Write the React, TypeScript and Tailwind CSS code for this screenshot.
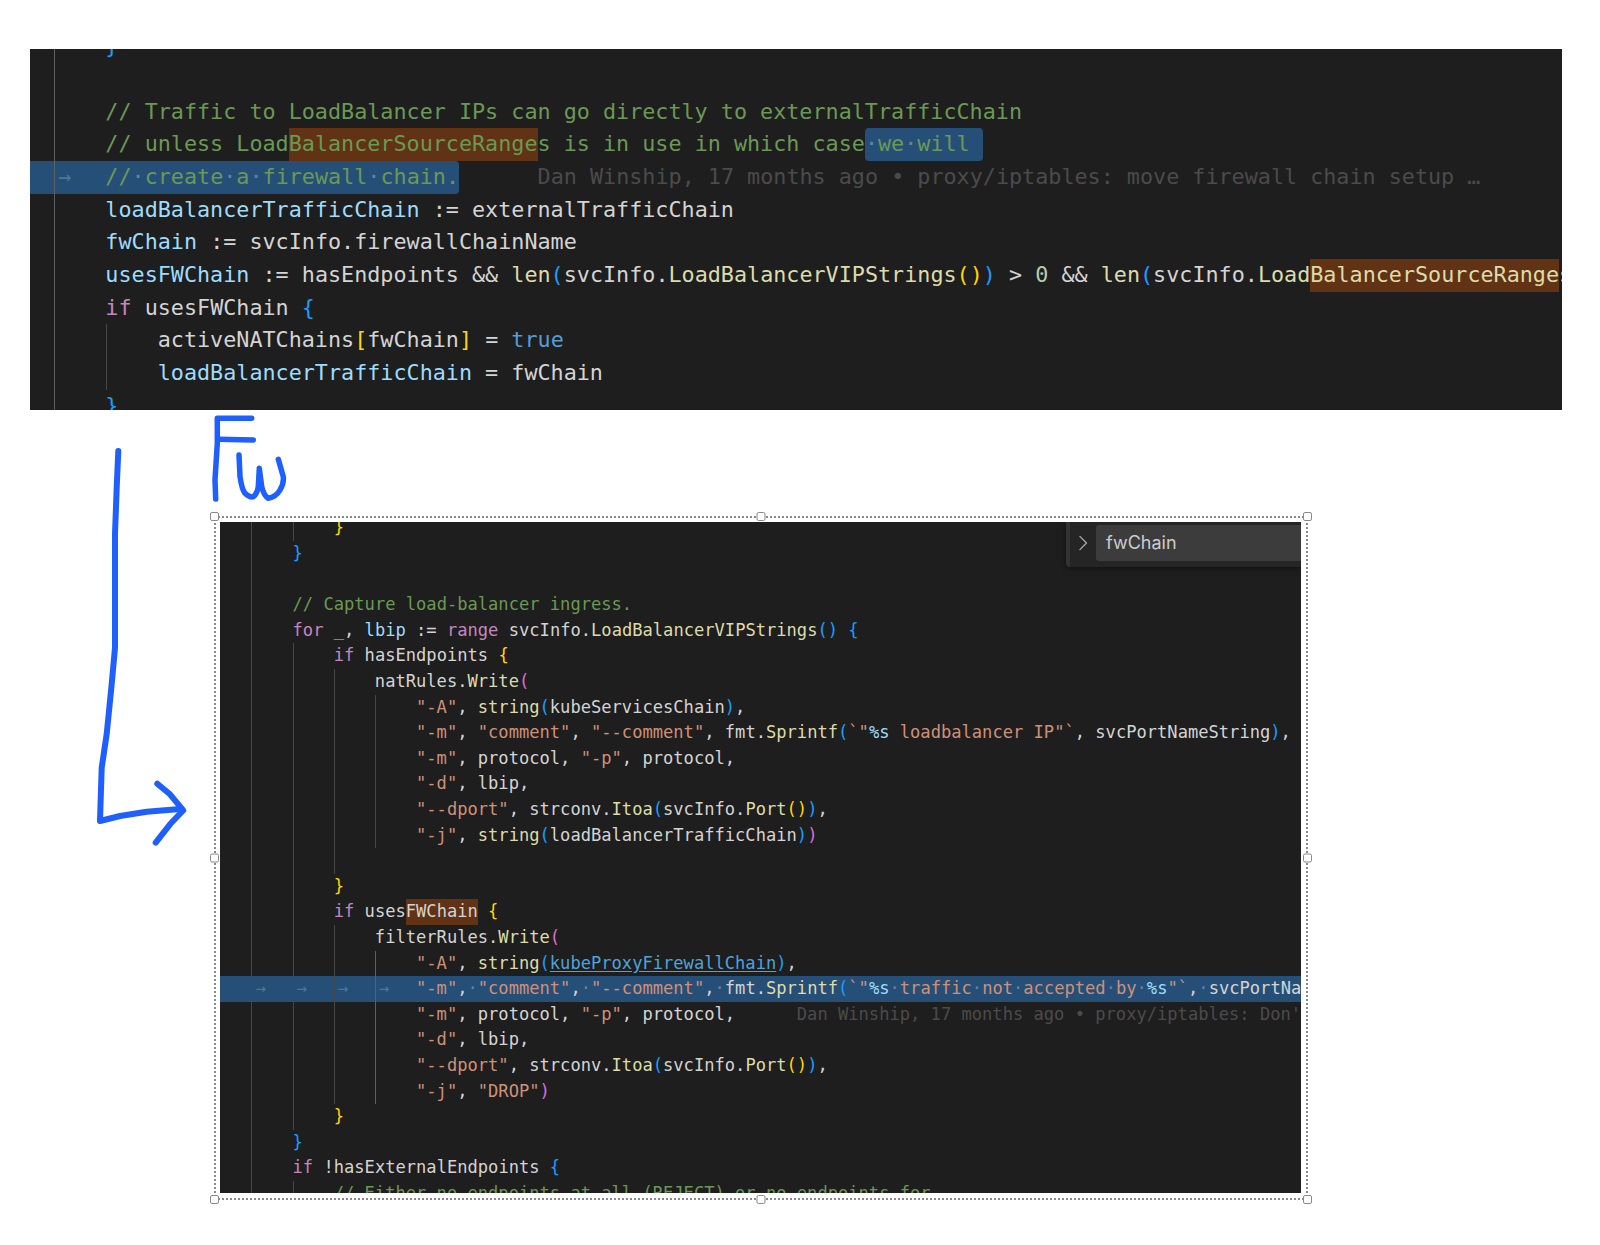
import type { ReactNode } from 'react';
import { ChevronRight } from 'lucide-react';

const Cm = ({ children }: { children: ReactNode }) => <span className="text-[#6a9955]">{children}</span>;
const V = ({ children }: { children: ReactNode }) => <span className="text-[#9cdcfe]">{children}</span>;
const Fn = ({ children }: { children: ReactNode }) => <span className="text-[#dcdcaa]">{children}</span>;
const Kw = ({ children }: { children: ReactNode }) => <span className="text-[#c586c0]">{children}</span>;
const Str = ({ children }: { children: ReactNode }) => <span className="text-[#ce9178]">{children}</span>;
const Y = ({ children }: { children: ReactNode }) => <span className="text-[#ffd700]">{children}</span>;
const B = ({ children }: { children: ReactNode }) => <span className="text-[#179fff]">{children}</span>;
const M = ({ children }: { children: ReactNode }) => <span className="text-[#da70d6]">{children}</span>;
const Dot = () => <span className="text-[#5f84a6]">·</span>;
const Hit = ({ children }: { children: ReactNode }) => <span className="inline-block bg-[#613214]">{children}</span>;

// one char per indent level: a = active guide, d = dim guide, space = no guide
const Indent = ({ lines, arrows }: { lines: string; arrows?: boolean }) => (
  <>
    {lines.split('').map((c, i) => (
      <span
        key={i}
        className={`h-full w-[4ch] shrink-0 border-l pl-[3px] text-[#4f7698] ${
          c === 'a' ? 'border-[#5f5f5f]' : c === 'd' ? 'border-[#464646]' : 'border-transparent'
        }`}
      >
        {arrows ? '→' : ''}
      </span>
    ))}
  </>
);

const TopRow = ({ lines = 'a', children }: { lines?: string; children?: ReactNode }) => (
  <div className="flex h-[32.67px] leading-[32.67px] text-[#d4d4d4]">
    <span className="w-[24.4px] shrink-0" />
    <Indent lines={lines} />
    <span className="ml-[-1px]">{children}</span>
  </div>
);

const Row = ({ lines, children }: { lines: string; children?: ReactNode }) => (
  <div className="flex h-[25.6px] leading-[25.6px] text-[#d4d4d4]">
    <span className="w-[31px] shrink-0" />
    <Indent lines={lines} />
    <span>{children}</span>
  </div>
);

const Handle = ({ className }: { className: string }) => (
  <span className={`absolute h-[9px] w-[9px] rounded-[2px] border border-[#8a8a8a] bg-white ${className}`} />
);

const TopPanel = () => (
  <div className="ml-[29.6px] mt-[49px] h-[360.6px] w-[1532.4px] overflow-hidden whitespace-pre bg-[#1e1e1e] font-['DejaVu_Sans_Mono',monospace] text-[21.75px]">
    <div className="mt-[-18.7px]">
      <TopRow><B>{'}'}</B></TopRow>
      <TopRow />
      <TopRow><Cm>// Traffic to LoadBalancer IPs can go directly to externalTrafficChain</Cm></TopRow>
      <TopRow>
        <Cm>// unless Load<Hit>BalancerSourceRange</Hit>s is in use in which case</Cm>
        <span className="inline-block rounded-[4px] bg-[#264f78]">
          <Dot /><Cm>we</Cm><Dot /><Cm>will </Cm>
        </span>
      </TopRow>
      <div className="flex h-[32.67px] leading-[32.67px]">
        <div className="flex rounded-r-[4px] bg-[#264f78]">
          <span className="w-[24.4px] shrink-0" />
          <Indent lines="a" arrows />
          <span className="ml-[-1px]">
            <Cm>//</Cm><Dot /><Cm>create</Cm><Dot /><Cm>a</Cm><Dot /><Cm>firewall</Cm><Dot /><Cm>chain.</Cm>
          </span>
        </div>
        <span className="ml-[6ch] text-[#4b4b4b]">Dan Winship, 17 months ago • proxy/iptables: move firewall chain setup …</span>
      </div>
      <TopRow><V>loadBalancerTrafficChain</V> := externalTrafficChain</TopRow>
      <TopRow><V>fwChain</V> := svcInfo.firewallChainName</TopRow>
      <TopRow>
        <V>usesFWChain</V> := hasEndpoints && <Fn>len</Fn><B>(</B>svcInfo.<Fn>LoadBalancerVIPStrings</Fn><Y>()</Y><B>)</B> {'> '}
        <span className="text-[#b5cea8]">0</span> && <Fn>len</Fn><B>(</B>svcInfo.<Fn>Load<Hit>BalancerSourceRange</Hit>s</Fn>
      </TopRow>
      <TopRow><Kw>if</Kw> usesFWChain <B>{'{'}</B></TopRow>
      <TopRow lines="ad">activeNATChains<Y>[</Y>fwChain<Y>]</Y> = <span className="text-[#569cd6]">true</span></TopRow>
      <TopRow lines="ad"><V>loadBalancerTrafficChain</V> = fwChain</TopRow>
      <TopRow><B>{'}'}</B></TopRow>
    </div>
  </div>
);

const CodeShot = () => (
  <div className="relative h-[671px] overflow-hidden whitespace-pre bg-[#1e1e1e] font-['DejaVu_Sans_Mono',monospace] text-[17.1px]">
    <div className="mt-[-6.8px]">
      <Row lines="dd"><Y>{'}'}</Y></Row>
      <Row lines="d"><B>{'}'}</B></Row>
      <Row lines="d" />
      <Row lines="d"><Cm>// Capture load-balancer ingress.</Cm></Row>
      <Row lines="d"><Kw>for</Kw> <V>_</V>, <V>lbip</V> := <Kw>range</Kw> svcInfo.<Fn>LoadBalancerVIPStrings</Fn><B>()</B> <B>{'{'}</B></Row>
      <Row lines="dd"><Kw>if</Kw> hasEndpoints <Y>{'{'}</Y></Row>
      <Row lines="ddd">natRules.<Fn>Write</Fn><M>(</M></Row>
      <Row lines="dddd"><Str>"-A"</Str>, <Fn>string</Fn><B>(</B>kubeServicesChain<B>)</B>,</Row>
      <Row lines="dddd">
        <Str>"-m"</Str>, <Str>"comment"</Str>, <Str>"--comment"</Str>, fmt.<Fn>Sprintf</Fn><B>(</B>
        <Str>`"</Str><V>%s</V><Str> loadbalancer IP"`</Str>, svcPortNameString<B>)</B>,
      </Row>
      <Row lines="dddd"><Str>"-m"</Str>, protocol, <Str>"-p"</Str>, protocol,</Row>
      <Row lines="dddd"><Str>"-d"</Str>, lbip,</Row>
      <Row lines="dddd"><Str>"--dport"</Str>, strconv.<Fn>Itoa</Fn><B>(</B>svcInfo.<Fn>Port</Fn><Y>()</Y><B>)</B>,</Row>
      <Row lines="dddd"><Str>"-j"</Str>, <Fn>string</Fn><B>(</B>loadBalancerTrafficChain<B>)</B><M>)</M></Row>
      <Row lines="ddd" />
      <Row lines="dd"><Y>{'}'}</Y></Row>
      <Row lines="dd"><Kw>if</Kw> uses<Hit>FWChain</Hit> <Y>{'{'}</Y></Row>
      <Row lines="ddd">filterRules.<Fn>Write</Fn><M>(</M></Row>
      <Row lines="ddda">
        <Str>"-A"</Str>, <Fn>string</Fn><B>(</B><span className="text-[#4fa3dc] underline underline-offset-2">kubeProxyFirewallChain</span><B>)</B>,
      </Row>
      <div className="flex h-[25.6px] bg-[#264f78] leading-[25.6px] text-[#d4d4d4]">
        <span className="w-[31px] shrink-0" />
        <Indent lines="ddda" arrows />
        <span>
          <Str>"-m"</Str>,<Dot /><Str>"comment"</Str>,<Dot /><Str>"--comment"</Str>,<Dot />fmt.<Fn>Sprintf</Fn><B>(</B>
          <Str>`"</Str><V>%s</V><Dot /><Str>traffic</Str><Dot /><Str>not</Str><Dot /><Str>accepted</Str><Dot /><Str>by</Str><Dot /><V>%s</V><Str>"`</Str>,<Dot />svcPortNa
        </span>
      </div>
      <div className="flex h-[25.6px] leading-[25.6px] text-[#d4d4d4]">
        <span className="w-[31px] shrink-0" />
        <Indent lines="ddda" />
        <span><Str>"-m"</Str>, protocol, <Str>"-p"</Str>, protocol,</span>
        <span className="ml-[6ch] text-[#4b4b4b]">Dan Winship, 17 months ago • proxy/iptables: Don'</span>
      </div>
      <Row lines="ddda"><Str>"-d"</Str>, lbip,</Row>
      <Row lines="ddda"><Str>"--dport"</Str>, strconv.<Fn>Itoa</Fn><B>(</B>svcInfo.<Fn>Port</Fn><Y>()</Y><B>)</B>,</Row>
      <Row lines="ddda"><Str>"-j"</Str>, <Str>"DROP"</Str><M>)</M></Row>
      <Row lines="dd"><Y>{'}'}</Y></Row>
      <Row lines="d"><B>{'}'}</B></Row>
      <Row lines="d"><Kw>if</Kw> !hasExternalEndpoints <B>{'{'}</B></Row>
      <Row lines="dd"><Cm>// Either no endpoints at all (REJECT) or no endpoints for</Cm></Row>
    </div>
    {/* find widget */}
    <div className="absolute right-0 top-0 flex h-[45px] w-[235.4px] items-start rounded-bl-[4px] border-l-[4px] border-[#333333] bg-[#252526] pt-[2.6px] font-['Inter',sans-serif] shadow-[0_1px_6px_rgba(0,0,0,0.5)]">
      <span className="flex h-[36px] w-[26.4px] shrink-0 items-center justify-center">
        <ChevronRight size={28} strokeWidth={1.2} className="text-[#aaaaaa]" />
      </span>
      <div className="h-[36px] flex-1 rounded-l-[3px] bg-[#3c3c3c] pl-[10px] text-[18px] leading-[36px] text-[#cccccc]">fwChain</div>
    </div>
  </div>
);

export default function App() {
  return (
    <div className="min-h-[1245px] overflow-hidden bg-white">
      <TopPanel />
      <div className="flex items-start pl-[96px]">
        <svg viewBox="96 446 94 400" className="mt-[37.4px] h-[400px] w-[94px] shrink-0" fill="none" stroke="#1f5eff" strokeWidth="6" strokeLinecap="round" strokeLinejoin="round">
          <path d="M118.3 450 L116.7 486.7 L115 533 L115 613 L115 646.7 L111.7 683 L106.7 733 L101.7 766.7 L100 820 L120 815 L146.7 810.7 L180 808" />
          <path d="M157.3 782.7 L170 793.3 L183.3 809.3 L170 823.3 L155.7 841.7" />
        </svg>
        <div className="ml-[24px] w-[1094px]">
          <svg viewBox="210 410 84 95" className="ml-[-4px] h-[95px] w-[84px]" fill="none" stroke="#1f5eff" strokeWidth="5.5" strokeLinecap="round" strokeLinejoin="round">
            <path d="M215.7 499 L215 480 L217.3 443.3 L217.3 418.3 L251.7 418.3" />
            <path d="M218.3 439.3 L253.3 440" />
            <path d="M239 455 L240 476.7 Q242 490 245 493.3 Q250 498 253.3 496.7 Q257 494 258.3 486.7 L259.3 468.3 L261.7 486.7 Q264 496 268.3 498.3 Q276 497 280 490 Q284 484 283.3 476.7 L278.3 459.3" />
          </svg>
          <div className="relative mt-[11px] border-2 border-dotted border-[#8a8a8a] pb-[4.5px] pl-[4.4px] pr-[5px] pt-[4.7px]">
            <Handle className="-left-[6px] -top-[6px]" />
            <Handle className="left-1/2 -top-[6px] -translate-x-1/2" />
            <Handle className="-right-[6px] -top-[6px]" />
            <Handle className="-left-[6px] top-1/2 -translate-y-1/2" />
            <Handle className="-right-[6px] top-1/2 -translate-y-1/2" />
            <Handle className="-bottom-[6px] -left-[6px]" />
            <Handle className="-bottom-[6px] left-1/2 -translate-x-1/2" />
            <Handle className="-bottom-[6px] -right-[6px]" />
            <CodeShot />
          </div>
        </div>
      </div>
    </div>
  );
}
